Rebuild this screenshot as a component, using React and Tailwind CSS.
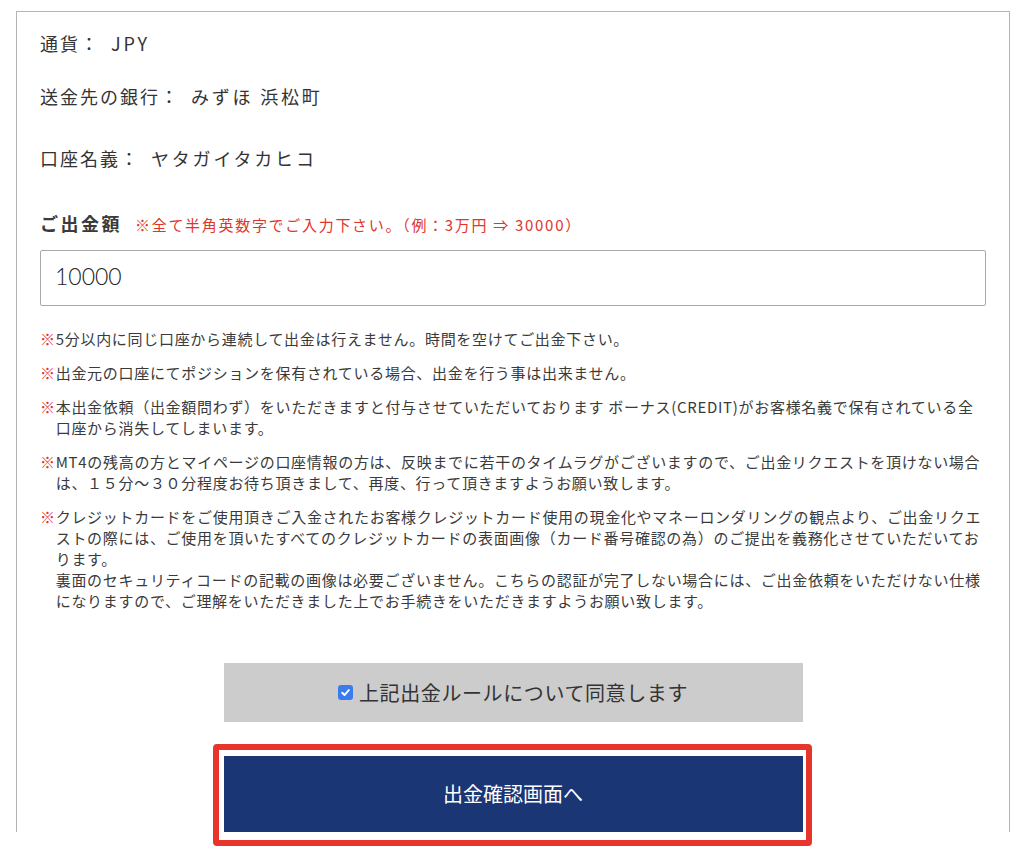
import React from "react";

const notes = [
  ["※5分以内に同じ口座から連続して出金は行えません。時間を空けてご出金下さい。"],
  ["※出金元の口座にてポジションを保有されている場合、出金を行う事は出来ません。"],
  [
    "※本出金依頼（出金額問わず）をいただきますと付与させていただいております ボーナス(CREDIT)がお客様名義で保有されている全",
    "口座から消失してしまいます。",
  ],
  [
    "※MT4の残高の方とマイページの口座情報の方は、反映までに若干のタイムラグがございますので、ご出金リクエストを頂けない場合",
    "は、１５分～３０分程度お待ち頂きまして、再度、行って頂きますようお願い致します。",
  ],
  [
    "※クレジットカードをご使用頂きご入金されたお客様クレジットカード使用の現金化やマネーロンダリングの観点より、ご出金リクエ",
    "ストの際には、ご使用を頂いたすべてのクレジットカードの表面画像（カード番号確認の為）のご提出を義務化させていただいてお",
    "ります。",
    "裏面のセキュリティコードの記載の画像は必要ございません。こちらの認証が完了しない場合には、ご出金依頼をいただけない仕様",
    "になりますので、ご理解をいただきました上でお手続きをいただきますようお願い致します。",
  ],
];

function NoteLine({ text, first }) {
  if (first && text.startsWith("※")) {
    return (
      <div className="whitespace-nowrap">
        <span className="text-[#e0352b]">※</span>
        {text.slice(1)}
      </div>
    );
  }
  return <div className="whitespace-nowrap pl-[15.7px]">{text}</div>;
}

function InfoRow({ label, value, className }) {
  return (
    <div className={"text-[18px] leading-[27px] tracking-[2px] whitespace-nowrap " + className}>
      <span>{label}</span>
      <span className="ml-[11px] tracking-[2.8px]">{value}</span>
    </div>
  );
}

export default function App() {
  return (
    <div
      className="relative w-[1024px] h-[855px] overflow-hidden bg-white text-[#333]"
      style={{ fontFamily: '"Noto Sans CJK JP", "Noto Sans", sans-serif' }}
    >
      <div className="ml-[16px] mt-[11px] w-[994px] h-[821px] border-t border-x border-[#b4b4b4] px-[23px] pt-[18px]">
        <InfoRow className="" label="通貨：" value="JPY" />
        <InfoRow className="mt-[26px]" label="送金先の銀行：" value="みずほ 浜松町" />
        <InfoRow className="mt-[35px]" label="口座名義：" value="ヤタガイタカヒコ" />
        <div className="mt-[38px] flex items-baseline leading-[27px]">
          <span className="text-[18px] font-bold text-[#3a3a3a] tracking-[2.5px]">ご出金額</span>
          <span className="ml-[13px] text-[15px] text-[#e0352b] tracking-[1.7px]">
            ※全て半角英数字でご入力下さい。（例：3万円 ⇒ 30000）
          </span>
        </div>
        <div className="mt-[12px] h-[56px] w-full rounded-[2px] border border-[#a9a9a9] flex items-center pl-[14px] pb-[3px]">
          <span
            className="text-[23px] font-light text-[#222]"
            style={{ fontFamily: "Lato, 'Liberation Sans', sans-serif" }}
          >
            10000
          </span>
        </div>

        <div className="mt-[22px] flex flex-col gap-[13px] text-[15px] leading-[21px] tracking-[0.7px] text-[#3a3a3a]">
          {notes.map((lines, i) => (
            <div key={i}>
              {lines.map((t, j) => (
                <NoteLine key={j} text={t} first={j === 0} />
              ))}
            </div>
          ))}
        </div>

        <div className="mx-auto mt-[52px] w-[579px] h-[59px] bg-[#cccccc] flex items-center justify-center gap-[6px]">
          <span className="w-[15px] h-[15px] rounded-[3px] bg-[#3a7cee] flex items-center justify-center">
            <svg width="11" height="11" viewBox="0 0 10 10" fill="none">
              <path d="M2 5.2 L4.1 7.3 L8 2.8" stroke="white" strokeWidth="1.7" strokeLinecap="round" strokeLinejoin="round" />
            </svg>
          </span>
          <span className="text-[20px] text-[#333] tracking-[0.6px]">上記出金ルールについて同意します</span>
        </div>

        <div className="mx-auto mt-[34px] w-[579px] h-[76px] bg-[#1b3674] flex items-center justify-center">
          <span className="text-[20px] text-white">出金確認画面へ</span>
        </div>
      </div>

      <div className="absolute left-[213px] top-[744px] w-[599px] h-[102px] border-[6px] border-[#e8352b] rounded-[4px]" />
    </div>
  );
}
